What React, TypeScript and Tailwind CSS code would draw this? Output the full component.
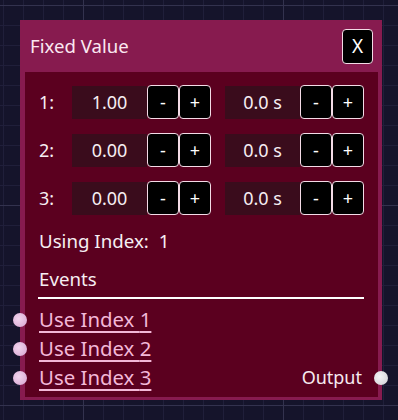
import React from "react"

const rows = [
  { id: 1, value: "1.00", time: "0.0 s" },
  { id: 2, value: "0.00", time: "0.0 s" },
  { id: 3, value: "0.00", time: "0.0 s" },
]

const StepButton = ({ label }: { label: string }) => (
  <button className="flex h-[34px] w-[32px] items-center justify-center rounded-[4px] border border-[#f3dbe6] bg-black text-[18px] leading-none text-white">
    {label}
  </button>
)

const ValueField = ({ value }: { value: string }) => (
  <div className="flex h-[33px] w-[75px] items-center justify-center bg-[#3a0c1c] text-[18px] text-[#f6eef2]">
    {value}
  </div>
)

const InputHandle = () => (
  <span className="absolute left-[-12px] top-1/2 h-[14px] w-[14px] -translate-y-1/2 rounded-full bg-[radial-gradient(circle_at_40%_40%,#f2d6ee,#d6a2cf)]" />
)

export default function App() {
  return (
    <div className="relative h-[420px] w-[398px] overflow-hidden bg-[#15142b] bg-[linear-gradient(to_right,#33324e_1px,transparent_1px),linear-gradient(to_bottom,#33324e_1px,transparent_1px),linear-gradient(to_right,#201f3a_1px,transparent_1px),linear-gradient(to_bottom,#201f3a_1px,transparent_1px)] bg-[size:200px_200px,200px_200px,20px_20px,20px_20px] bg-[position:83px_5px,83px_5px,3px_5px,3px_5px] font-['Noto_Sans',sans-serif]">
      <div className="absolute left-[20px] top-[20px] w-[362px] bg-[#871b4f] pb-[3px] pl-[5px] pr-[4px]">
        <div className="flex h-[52px] items-center justify-between pl-[5px] pr-[5px]">
          <span className="text-[18.6px] text-[#fbe8f1]">Fixed Value</span>
          <button className="flex h-[35px] w-[31px] items-center justify-center rounded-[4px] border border-[#f3dbe6] bg-black text-[19px] text-white">
            X
          </button>
        </div>

        <div className="bg-[#5b001f] pb-[5px] pt-[13px] text-[18px] text-[#f6eef2]">
          <div className="flex flex-col gap-[14px] pl-[14px]">
            {rows.map((row) => (
              <div key={row.id} className="flex h-[34px] items-center">
                <span className="w-[33px]">{row.id}:</span>
                <ValueField value={row.value} />
                <StepButton label="-" />
                <StepButton label="+" />
                <div className="w-[14px]" />
                <ValueField value={row.time} />
                <StepButton label="-" />
                <StepButton label="+" />
              </div>
            ))}
          </div>

          <div className="mt-[14px] flex h-[24px] items-center gap-[10px] pl-[14px] text-[18.7px]">
            <span>Using Index:</span>
            <span>1</span>
          </div>

          <div className="mt-[14px] flex h-[24px] items-center pl-[14px] text-[18.7px]">Events</div>
          <div className="ml-[13px] mt-[6px] h-[2px] w-[326px] bg-white" />

          <div className="mt-[6px]">
            {[1, 2, 3].map((n) => (
              <div key={n} className="relative flex h-[29px] items-center justify-between pl-[14px] pr-[16px]">
                <InputHandle />
                <a className="text-[20.4px] text-[#f3b8d8] underline decoration-[1.5px] underline-offset-[4px]">Use Index {n}</a>
                {n === 3 && (
                  <>
                    <span className="text-[#f6eaf0]">Output</span>
                    <span className="absolute right-[-10px] top-1/2 h-[14px] w-[14px] -translate-y-1/2 rounded-full bg-[radial-gradient(circle_at_40%_40%,#f4f4f6,#cfcfd4)]" />
                  </>
                )}
              </div>
            ))}
          </div>
        </div>
      </div>
    </div>
  )
}
